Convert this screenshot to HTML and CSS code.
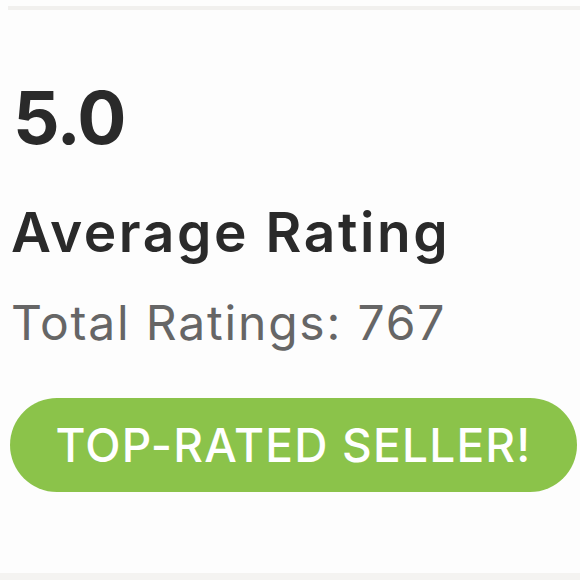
FILE: index.html
```html
<!DOCTYPE html>
<html>
<head>
<meta charset="utf-8">
<link rel="stylesheet" href="styles.css">
</head>
<body>
<div class="page">
  <div class="top-rule"></div>
  <div class="card">
    <div class="score">5.0</div>
    <div class="label">Average Rating</div>
    <div class="total">Total Ratings: 767</div>
    <div class="badge">TOP-RATED SELLER!</div>
  </div>
  <div class="bottom-rule"></div>
</div>
</body>
</html>
```
FILE: styles.css
```css
html, body {
  margin: 0;
  padding: 0;
  background: #fdfdfd;
}
.page {
  width: 580px;
  height: 580px;
  display: flex;
  flex-direction: column;
  font-family: "Inter", "Liberation Sans", sans-serif;
}
.top-rule {
  margin: 6px 0 0 8px;
  height: 4px;
  background: #f1f0ee;
}
.card {
  flex: 1;
  display: flex;
  flex-direction: column;
  align-items: flex-start;
  padding: 0 0 0 10px;
}
.score {
  margin-top: 68px;
  font-size: 73px;
  font-weight: 700;
  line-height: 80px;
  letter-spacing: -1.5px;
  color: #2a2a2a;
  padding-left: 3px;
}
.label {
  margin-top: 42px;
  font-size: 55px;
  font-weight: 600;
  line-height: 64px;
  letter-spacing: 2.6px;
  color: #2a2a2a;
  padding-left: 1px;
}
.total {
  margin-top: 31px;
  font-size: 48px;
  font-weight: 400;
  line-height: 56px;
  letter-spacing: 1.8px;
  color: #666666;
  padding-left: 1px;
}
.badge {
  margin-top: 47px;
  width: 567px;
  height: 94px;
  box-sizing: border-box;
  border-radius: 47px;
  background: #8bc34a;
  color: #ffffff;
  font-size: 46px;
  font-weight: 500;
  letter-spacing: 1.2px;
  display: flex;
  align-items: center;
  justify-content: center;
}
.bottom-rule {
  height: 7px;
  background: #f4f3f1;
}
```
